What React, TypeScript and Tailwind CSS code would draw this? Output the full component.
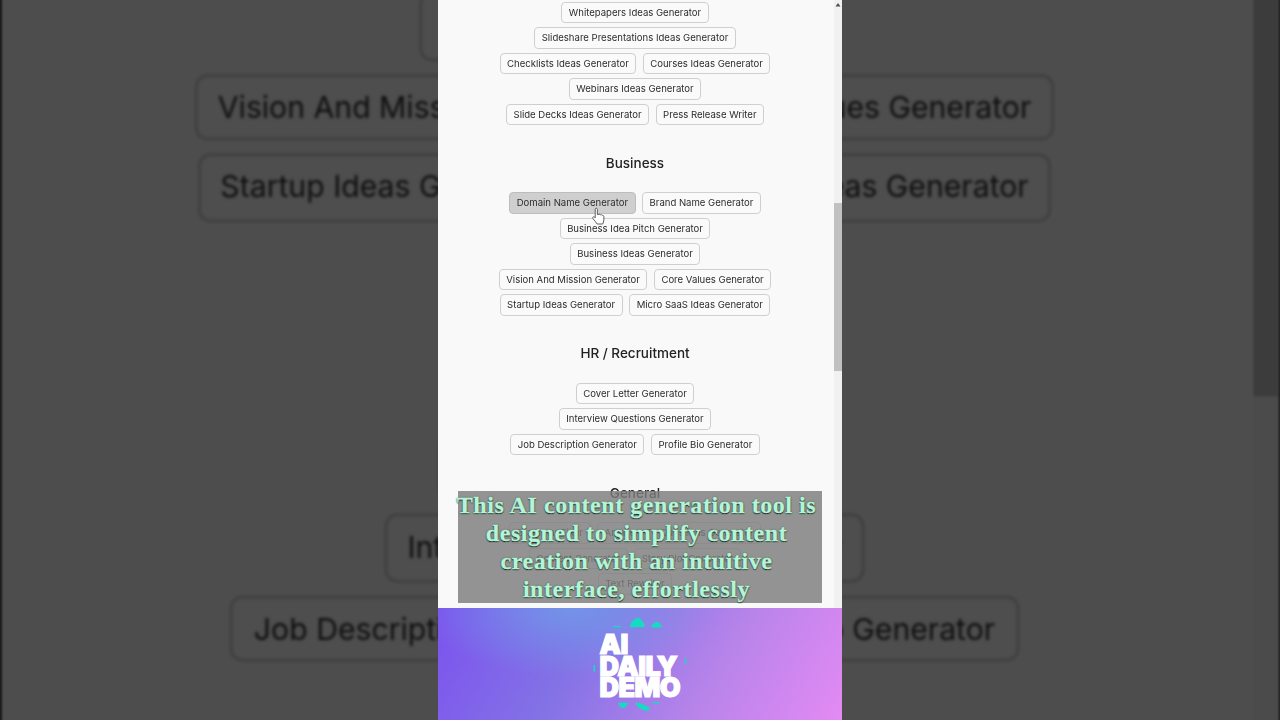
import React from "react";

const sections: { title?: string; rows: string[][] }[] = [
  {
    rows: [
      ["Whitepapers Ideas Generator"],
      ["Slideshare Presentations Ideas Generator"],
      ["Checklists Ideas Generator", "Courses Ideas Generator"],
      ["Webinars Ideas Generator"],
      ["Slide Decks Ideas Generator", "Press Release Writer"],
    ],
  },
  {
    title: "Business",
    rows: [
      ["Domain Name Generator", "Brand Name Generator"],
      ["Business Idea Pitch Generator"],
      ["Business Ideas Generator"],
      ["Vision And Mission Generator", "Core Values Generator"],
      ["Startup Ideas Generator", "Micro SaaS Ideas Generator"],
    ],
  },
  {
    title: "HR / Recruitment",
    rows: [
      ["Cover Letter Generator"],
      ["Interview Questions Generator"],
      ["Job Description Generator", "Profile Bio Generator"],
    ],
  },
  {
    title: "General",
    rows: [
      ["Grammar Fixer", "Answers To Questions Generator"],
      ["Content Generator", "Story Plot Generator"],
      ["Text Rewriter"],
    ],
  },
];

function Panel() {
  return (
    <div className="flex h-[608px] w-[404px] overflow-hidden bg-[#f9f9f9] font-['Inter',sans-serif] text-[#2c2c2c]">
      <div className="flex w-[396px] flex-col items-center pr-[2px] pt-[1.6px] blur-[0.3px]">
        {sections.map((s, i) => (
          <section key={i} className="flex w-full flex-col items-center">
            {s.title && (
              <h2 className="mb-[19.4px] mt-[27.4px] h-[20px] text-[13.5px] font-medium leading-[20px] text-[#222]">
                {s.title}
              </h2>
            )}
            <div className="flex flex-col gap-[4px]">
              {s.rows.map((row, r) => (
                <div key={r} className="flex justify-center gap-[6.5px]">
                  {row.map((label) => (
                    <button
                      key={label}
                      className={`h-[21.55px] whitespace-nowrap rounded-[4px] border px-[6.5px] text-[9.55px] leading-none ${
                        label === "Domain Name Generator"
                          ? "border-[#bdbdbd] bg-[#cfcfcf]"
                          : "border-[#cfcfcf] bg-[#fafafa]"
                      }`}
                    >
                      {label}
                    </button>
                  ))}
                </div>
              ))}
            </div>
          </section>
        ))}
      </div>
      <div className="flex w-[8px] flex-col bg-[#f1f1f1]">
        <svg viewBox="0 0 8 8" className="mt-[1px] h-[8px] w-[8px] shrink-0">
          <path d="M4 2 L6.5 5.5 H1.5 Z" fill="#505050" />
        </svg>
        <div className="mt-[194px] h-[168px] w-full bg-[#c1c1c1]" />
      </div>
    </div>
  );
}

function Logo() {
  return (
    <div className="relative flex h-[112px] w-[404px] justify-center overflow-hidden bg-[radial-gradient(ellipse_150px_70px_at_130px_0px,#6f9ee8cc,transparent),linear-gradient(120deg,#7c52ee_0%,#8372e6_35%,#b884ea_68%,#e48af4_100%)]">
      <svg viewBox="0 0 404 112" className="absolute inset-0 h-[112px] w-[404px]">
        <g fill="#14dcc0">
          <path d="M192 19 C193 13 197 10 200 10 C203 10 205 14 207 17 C207 20 203 19 200 19 C197 19 194 20 192 19 Z" />
          <path d="M213 19 C214 16 217 14 219 14 C221 14 223 16 224 19 C220 20 216 20 213 19 Z" />
          <rect x="175" y="18" width="8" height="1.2" rx="0.6" />
          <path d="M180 95 C183 94.5 187 94.5 190 95 C189 98 187 100 185 100 C183 100 181 98 180 95 Z" />
          <path d="M197 95 C200 94 203 96 206 97 C209 98 212 99 212 101 C211 103 207 103 205 102 C201 100 198 98 197 95 Z" />
          <rect x="214" y="94" width="8" height="1.2" rx="0.6" />
          <rect x="155.5" y="57" width="1.6" height="7" rx="0.8" />
          <rect x="246.5" y="50" width="2" height="6" rx="1" opacity="0.8" />
        </g>
      </svg>
      <div className="relative mt-[26px] flex w-[81px] flex-col font-['Inter',sans-serif] text-[27px] font-black uppercase leading-[21.5px] tracking-[-0.5px] text-white [-webkit-text-stroke:1.2px_white]">
        <span>AI</span>
        <span className="whitespace-nowrap">Daily</span>
        <span className="whitespace-nowrap">Demo</span>
      </div>
    </div>
  );
}

function Cursor() {
  return (
    <svg viewBox="0 0 16 20" className="absolute left-[153px] top-[207px] h-[19px] w-[15px]">
      <path
        d="M4.5 2.2 C4.5 0.8 6.8 0.8 6.8 2.2 V8 L8.6 7.6 C9.4 7.4 10 7.7 10.2 8.2 C11 7.9 11.8 8.1 12 8.8 C12.8 8.6 13.6 9 13.7 9.9 V13.5 C13.7 15.5 13 16.5 12.5 18 H6.5 C5.5 16 3.6 14.2 2 12.2 C1.2 11.1 2.4 9.8 3.6 10.6 L4.5 11.4 Z"
        fill="#ffffff"
        stroke="#555555"
        strokeWidth="1"
        strokeLinejoin="round"
      />
    </svg>
  );
}

export default function App() {
  return (
    <div className="relative flex h-[720px] w-[1280px] justify-center overflow-hidden bg-[#4d4d4d]">
      <div aria-hidden className="absolute inset-0 overflow-hidden">
        <div className="absolute left-[1.5px] top-[-776.5px] origin-top-left scale-[3.16] blur-[0.4px]">
          <Panel />
        </div>
        <div className="absolute inset-0 bg-black/[0.69]" />
      </div>
      <main className="relative flex w-[404px] flex-col">
        <Panel />
        <Logo />
        <Cursor />
        <div className="absolute left-[20px] top-[491px] flex h-[112px] w-[364px] flex-col items-center bg-[#7d7d7d]/[0.82] pr-[7px] font-['Liberation_Serif',serif] text-[24px] font-bold leading-[28px] tracking-[0.55px] text-[#b4f5d8] [-webkit-text-stroke:0.35px_#b4f5d8] [text-shadow:0_0_1.5px_#16201c,0_1px_1px_#16201c]">
          <p className="whitespace-nowrap">This AI content generation tool is</p>
          <p className="whitespace-nowrap">designed to simplify content</p>
          <p className="whitespace-nowrap">creation with an intuitive</p>
          <p className="whitespace-nowrap">interface, effortlessly</p>
        </div>
      </main>
    </div>
  );
}
